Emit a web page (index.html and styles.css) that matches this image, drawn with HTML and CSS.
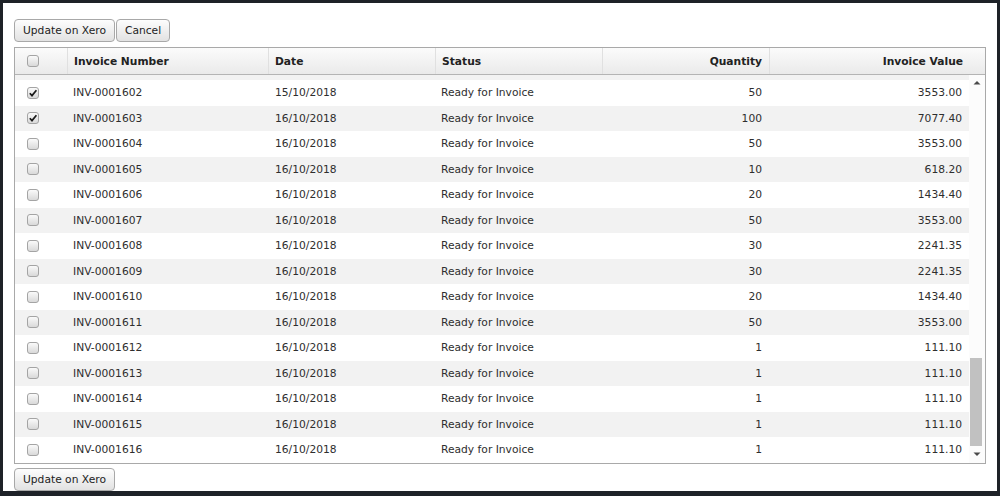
FILE: index.html
```html
<!DOCTYPE html>
<html>
<head>
<meta charset="utf-8">
<link rel="stylesheet" href="styles.css">
</head>
<body>
<div class="frame">
  <div class="toolbar">
    <button class="btn">Update on Xero</button>
    <button class="btn">Cancel</button>
  </div>
  <div class="grid">
    <div class="head">
      <div class="hc c-chk"><span class="cb"></span></div>
      <div class="hc">Invoice Number</div>
      <div class="hc">Date</div>
      <div class="hc">Status</div>
      <div class="hc num">Quantity</div>
      <div class="hc num">Invoice Value</div>
      <div class="hc corner"></div>
    </div>
    <div class="bodywrap">
      <div class="rows">
        <div class="sliver"></div>
        <div class="row"><div class="c c-chk"><span class="cb on"><svg viewBox="0 0 12 12"><path d="M2.8 6.2 L5 8.6 L9.4 3.2"/></svg></span></div><div class="c">INV-0001602</div><div class="c">15/10/2018</div><div class="c">Ready for Invoice</div><div class="c num">50</div><div class="c num">3553.00</div></div>
        <div class="row alt"><div class="c c-chk"><span class="cb on"><svg viewBox="0 0 12 12"><path d="M2.8 6.2 L5 8.6 L9.4 3.2"/></svg></span></div><div class="c">INV-0001603</div><div class="c">16/10/2018</div><div class="c">Ready for Invoice</div><div class="c num">100</div><div class="c num">7077.40</div></div>
        <div class="row"><div class="c c-chk"><span class="cb"></span></div><div class="c">INV-0001604</div><div class="c">16/10/2018</div><div class="c">Ready for Invoice</div><div class="c num">50</div><div class="c num">3553.00</div></div>
        <div class="row alt"><div class="c c-chk"><span class="cb"></span></div><div class="c">INV-0001605</div><div class="c">16/10/2018</div><div class="c">Ready for Invoice</div><div class="c num">10</div><div class="c num">618.20</div></div>
        <div class="row"><div class="c c-chk"><span class="cb"></span></div><div class="c">INV-0001606</div><div class="c">16/10/2018</div><div class="c">Ready for Invoice</div><div class="c num">20</div><div class="c num">1434.40</div></div>
        <div class="row alt"><div class="c c-chk"><span class="cb"></span></div><div class="c">INV-0001607</div><div class="c">16/10/2018</div><div class="c">Ready for Invoice</div><div class="c num">50</div><div class="c num">3553.00</div></div>
        <div class="row"><div class="c c-chk"><span class="cb"></span></div><div class="c">INV-0001608</div><div class="c">16/10/2018</div><div class="c">Ready for Invoice</div><div class="c num">30</div><div class="c num">2241.35</div></div>
        <div class="row alt"><div class="c c-chk"><span class="cb"></span></div><div class="c">INV-0001609</div><div class="c">16/10/2018</div><div class="c">Ready for Invoice</div><div class="c num">30</div><div class="c num">2241.35</div></div>
        <div class="row"><div class="c c-chk"><span class="cb"></span></div><div class="c">INV-0001610</div><div class="c">16/10/2018</div><div class="c">Ready for Invoice</div><div class="c num">20</div><div class="c num">1434.40</div></div>
        <div class="row alt"><div class="c c-chk"><span class="cb"></span></div><div class="c">INV-0001611</div><div class="c">16/10/2018</div><div class="c">Ready for Invoice</div><div class="c num">50</div><div class="c num">3553.00</div></div>
        <div class="row"><div class="c c-chk"><span class="cb"></span></div><div class="c">INV-0001612</div><div class="c">16/10/2018</div><div class="c">Ready for Invoice</div><div class="c num">1</div><div class="c num">111.10</div></div>
        <div class="row alt"><div class="c c-chk"><span class="cb"></span></div><div class="c">INV-0001613</div><div class="c">16/10/2018</div><div class="c">Ready for Invoice</div><div class="c num">1</div><div class="c num">111.10</div></div>
        <div class="row"><div class="c c-chk"><span class="cb"></span></div><div class="c">INV-0001614</div><div class="c">16/10/2018</div><div class="c">Ready for Invoice</div><div class="c num">1</div><div class="c num">111.10</div></div>
        <div class="row alt"><div class="c c-chk"><span class="cb"></span></div><div class="c">INV-0001615</div><div class="c">16/10/2018</div><div class="c">Ready for Invoice</div><div class="c num">1</div><div class="c num">111.10</div></div>
        <div class="row"><div class="c c-chk"><span class="cb"></span></div><div class="c">INV-0001616</div><div class="c">16/10/2018</div><div class="c">Ready for Invoice</div><div class="c num">1</div><div class="c num">111.10</div></div>
      </div>
      <div class="sbar">
        <div class="arrow"><svg viewBox="0 0 16 16"><path d="M4.5 9.5 L8 6 L11.5 9.5 Z"/></svg></div>
        <div class="track"><div class="thumb"></div></div>
        <div class="arrow down"><svg viewBox="0 0 16 16"><path d="M4.5 6.5 L8 10 L11.5 6.5 Z"/></svg></div>
      </div>
    </div>
  </div>
  <div class="toolbar bottom">
    <button class="btn">Update on Xero</button>
  </div>
</div>
</body>
</html>
```

FILE: styles.css
```css
html, body {
  margin: 0;
  padding: 0;
}
body {
  background: #1e2228;
  font-family: "DejaVu Sans", Verdana, sans-serif;
  font-size: 10.7px;
  color: #2e2e2e;
}
.frame {
  margin: 3px 3px 5px 3px;
  height: 488px;
  background: #fff;
  padding: 16px 11px 0 11px;
  box-sizing: border-box;
}
.toolbar {
  display: flex;
  gap: 1px;
}
.toolbar.bottom {
  margin-top: 4px;
}
.btn {
  height: 23px;
  padding: 0 8px;
  margin: 0;
  border: 1px solid #a8a8a8;
  border-radius: 4px;
  background: linear-gradient(#fdfdfd, #e2e2e2);
  color: #222;
  font-family: inherit;
  font-size: 10.7px;
  line-height: 21px;
}
.grid {
  margin-top: 5px;
  border: 1px solid #a9a9a9;
  height: 417px;
  box-sizing: border-box;
  display: flex;
  flex-direction: column;
}
.head {
  display: grid;
  grid-template-columns: 52px 201px 167px 167px 167px 200px 16px;
  height: 26px;
  border-bottom: 1px solid #b4b4b4;
  background: linear-gradient(#fbfbfb, #eaeaea);
  flex: none;
}
.hc {
  font-weight: bold;
  color: #222;
  display: flex;
  align-items: center;
  padding: 0 6px;
  border-left: 1px solid #e0e0e0;
}
.hc:first-child {
  border-left: none;
}
.hc.corner {
  border-left: none;
  padding: 0;
}
.hc.num {
  justify-content: flex-end;
}
.head .hc:nth-child(5) {
  padding-right: 7px;
}
.c-chk {
  padding: 0 0 0 12px;
}
.bodywrap {
  flex: 1;
  display: flex;
  overflow: hidden;
}
.rows {
  width: 954px;
  display: flex;
  flex-direction: column;
}
.sliver {
  height: 5px;
  background: #f2f2f2;
  flex: none;
}
.row {
  display: grid;
  grid-template-columns: 52px 201px 167px 167px 167px 200px;
  height: 25.5px;
  flex: none;
}
.row.alt {
  background: #f2f2f2;
}
.c {
  display: flex;
  align-items: center;
  padding: 0 6px;
  white-space: nowrap;
}
.c.c-chk {
  padding: 0 0 0 12px;
}
.c:nth-child(3) {
  padding-left: 7px;
}
.c.num {
  justify-content: flex-end;
  padding-right: 7px;
}
.cb {
  width: 10px;
  height: 10px;
  border: 1px solid #a4a4a4;
  border-radius: 3px;
  background: linear-gradient(#fafafa, #d9d9d9);
  display: block;
  position: relative;
}
.cb svg {
  width: 12px;
  height: 12px;
  position: absolute;
  left: -1px;
  top: -1px;
}
.cb svg path {
  fill: none;
  stroke: #1a1a1a;
  stroke-width: 1.7;
}
.sbar {
  width: 16px;
  display: flex;
  flex-direction: column;
  background: #fcfcfc;
}
.arrow {
  height: 16px;
  flex: none;
}
.arrow.down {
  height: 17px;
}
.arrow svg {
  width: 16px;
  height: 16px;
  display: block;
}
.arrow svg path {
  fill: #4a4a4a;
}
.track {
  flex: 1;
  display: flex;
  flex-direction: column;
  justify-content: flex-end;
}
.thumb {
  height: 88px;
  margin: 0 3px 0 1px;
  background: #c1c1c1;
}
```
